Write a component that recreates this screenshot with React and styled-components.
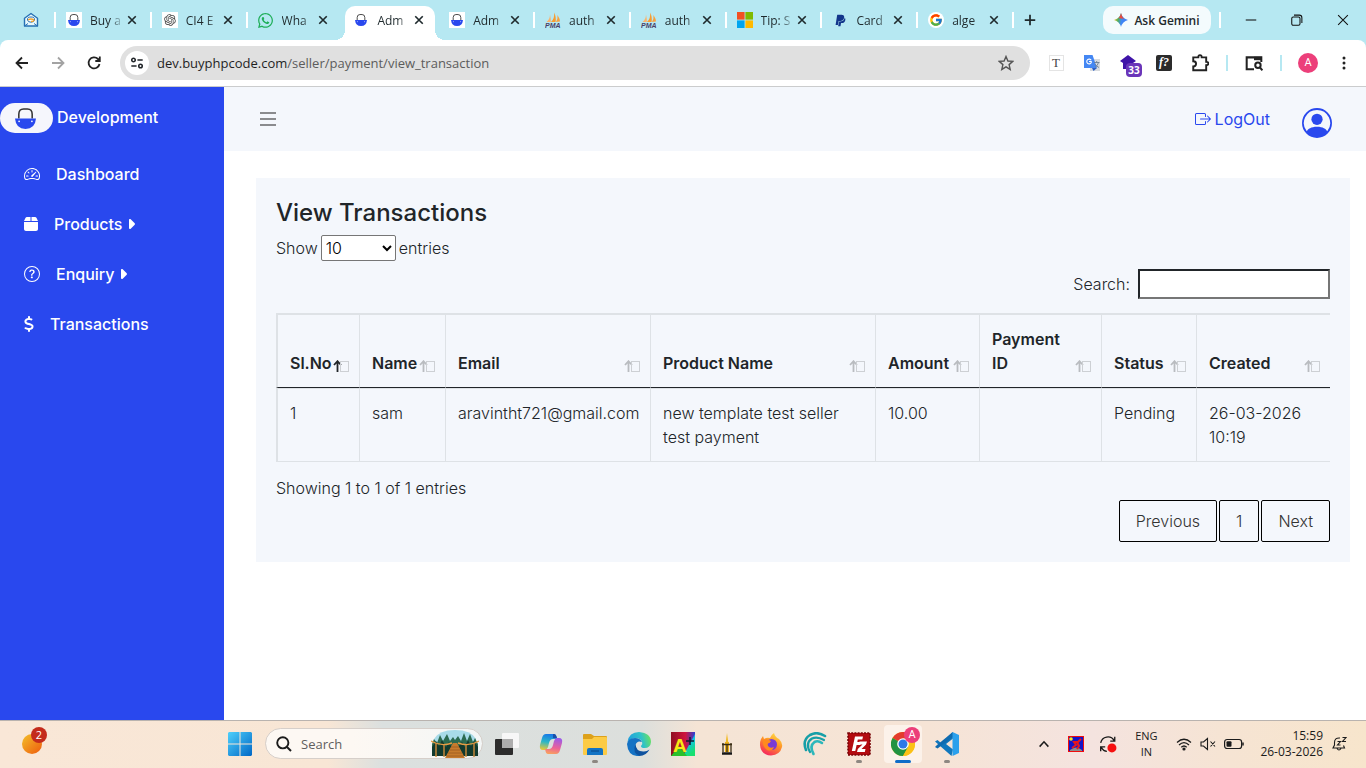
import React, { useState } from 'react';
import styled, { createGlobalStyle } from 'styled-components'
import { BsSpeedometer2, BsQuestionCircle, BsBoxArrowRight, BsPersonCircle } from 'react-icons/bs'
import { FaBox, FaDollarSign, FaCaretRight, FaWhatsapp, FaPaypal } from 'react-icons/fa6'
import { FcGoogle } from 'react-icons/fc'
import { RiOpenaiFill } from 'react-icons/ri'

const BLUE = '#2948ee';
const PANEL = '#f4f7fc';

const columns = [
  { key: 'id', label: 'Sl.No', width: 84 },
  { key: 'name', label: 'Name', width: 86 },
  { key: 'email', label: 'Email', width: 205 },
  { key: 'product', label: 'Product Name', width: 225 },
  { key: 'amount', label: 'Amount', width: 104 },
  { key: 'paymentId', label: 'Payment ID', width: 122 },
  { key: 'status', label: 'Status', width: 95 },
  { key: 'created', label: 'Created', width: 133 },
];

const transactions = [
  {
    id: '1',
    name: 'sam',
    email: 'aravintht721@gmail.com',
    product: 'new template test seller test payment',
    amount: '10.00',
    paymentId: '',
    status: 'Pending',
    created: '26-03-2026 10:19',
  },
];

/* ---------- icons ---------- */

const SiteLogo = ({ size = 16 }) => (
  <svg width={size} height={size} viewBox="0 0 22 22">
    <path d="M4 11V6.500Q4 1 9 1H13Q18 1 18 6.500V11" fill="none" stroke="#333" strokeWidth="1.600" />
    <path d="M0 11H22Q21 22 11 22Q1 22 0 11Z" fill={BLUE} />
    <circle cx="4.300" cy="14" r="0.900" fill="#fff" />
    <circle cx="17.700" cy="14" r="0.900" fill="#fff" />
  </svg>
);

const MailIcon = () => (
  <svg width="16" height="16" viewBox="0 0 16 16" fill="none">
    <path d="M1.500 6.200L8 1.500L14.500 6.200V14H1.500Z" fill="#e9f8fc" stroke="#2670b5" strokeWidth="1.400" strokeLinejoin="round" />
    <path d="M1.500 14L5 11.500M14.500 14L11 11.500" stroke="#2670b5" strokeWidth="1" />
    <path d="M4.500 8Q4 5 8 5Q12 5 11.500 8Q11 10.200 8 10.200Q5 10.200 4.500 8Z" fill="#fff" stroke="#2670b5" />
    <path d="M5 8Q8 6 11 8Q11 9.500 8 9.500" stroke="#f5a52c" strokeWidth="1.300" />
  </svg>
);

const PmaIcon = () => (
  <svg width="16" height="16" viewBox="0 0 16 16">
    <path d="M1.500 10Q5 7 5 2.500Q6 7 5.800 10Z" fill="#fbb36a" />
    <path d="M6 10Q10 6 9 0.500Q11.500 5 10.500 10Z" fill="#f89c2f" />
    <path d="M11 10Q13 7 12.500 3Q15 7 15 9.500Z" fill="#f9a03c" />
    <text x="0" y="15.500" fontFamily="Liberation Sans" fontSize="7" fontWeight="700" fontStyle="italic" fill="#4b3f68">PMA</text>
  </svg>
);

const MicrosoftIcon = () => (
  <svg width="16" height="16" viewBox="0 0 16 16">
    <path fill="#f25022" d="M0 0h7.600v7.600H0z" />
    <path fill="#7fba00" d="M8.400 0H16v7.600H8.400z" />
    <path fill="#00a4ef" d="M0 8.400h7.600V16H0z" />
    <path fill="#ffb900" d="M8.400 8.400H16V16H8.400z" />
  </svg>
);

const Glyph = ({ size = 16, d, width = 1.5, children }) => (
  <svg width={size} height={size} viewBox="0 0 16 16" fill="none" stroke="currentColor" strokeWidth={width}>
    {d && <path d={d} />}
    {children}
  </svg>
);

const SortMark = ({ active }) => (
  <svg width="16" height="12" viewBox="0 0 16 12" fill="none">
    <path d="M4.500 12V1.500M1 5L4.500 1.200L8 5" stroke={active ? '#212529' : '#b9bcc0'} strokeWidth="1.800" />
    <rect x="7.500" y="1.500" width="8" height="10" stroke="#cdd0d4" />
  </svg>
);

const GeminiIcon = () => (
  <svg width="14" height="14" viewBox="0 0 14 14">
    <defs>
      <linearGradient id="gemini" x1="0" x2="1" y1="0.400" y2="0.600">
        <stop offset="0" stopColor="#f3c51a" />
        <stop offset="0.300" stopColor="#4fae62" />
        <stop offset="0.550" stopColor="#3f87f5" />
        <stop offset="1" stopColor="#3f7df5" />
      </linearGradient>
    </defs>
    <path d="M7 0Q8.500 5.500 14 7Q8.500 8.500 7 14Q5.500 8.500 0 7Q5.500 5.500 7 0Z" fill="url(#gemini)" />
    <path d="M7 0Q8 4.500 10.500 5.800L4.500 5.300Q6.300 4 7 0Z" fill="#ea4a3c" />
  </svg>
);

const TranslateIcon = () => (
  <svg width="16" height="16" viewBox="0 0 16 16">
    <rect x="6" y="4" width="10" height="12" fill="#d9dce0" />
    <path d="M0 0H8.500L13 13H0Z" fill="#4487f3" />
    <path d="M8 13L9.500 16L13 13Z" fill="#2c5fc4" />
    <path d="M7.200 5.200A2.400 2.400 0 1 0 7.200 7.800V6.500H5" fill="none" stroke="#fff" strokeWidth="1.100" />
    <path d="M10 7.500H15.500M12.700 6V7.500M14.500 7.500Q13.500 11 11 12.500M11 9Q12.500 11.500 15 12.500" fill="none" stroke="#6c7f95" strokeWidth="0.900" />
  </svg>
);

const SearchThumb = () => (
  <svg width="48" height="28" viewBox="0 0 48 28">
    <path d="M3 9Q8 0 24 0Q40 0 45 9V25Q24 29 3 25Z" fill="#a8dbe9" />
    <path d="M1 25V14L3 9L6 13L9 5L12 11L16 4L19 11L22 7L24 10L27 6L30 11L33 3L36 11L39 4L42 12L44 8L47 14V25Z" fill="#2b6a50" />
    <path d="M1 26V17L5 11L8 16L11 10L15 17L18 12L20 16H28L31 12L34 17L37 10L40 16L43 11L47 17V26Z" fill="#123a2e" />
    <path d="M22 13H26L34 28H14Z" fill="#c67b2d" />
    <path d="M20 17H28M19 20H29M17 23H31M16 26H32" stroke="#9a5a22" strokeWidth="0.800" />
    <path d="M0 11Q10 17 21 13M27 13Q38 17 48 11" fill="none" stroke="#e59d45" strokeWidth="1.400" />
    <path d="M5 13V27M13 15V27M35 15V27M43 13V27" stroke="#d08b3b" strokeWidth="1.400" />
  </svg>
);

const WindowsIcon = () => (
  <svg width="24" height="24" viewBox="0 0 24 24">
    <defs>
      <linearGradient id="win" x1="0" y1="0" x2="1" y2="1">
        <stop offset="0" stopColor="#4fd0fb" />
        <stop offset="1" stopColor="#0067c6" />
      </linearGradient>
    </defs>
    <path fill="url(#win)" d="M1 0H11.500V11.500H0V1ZM12.500 0H23L24 1V11.500H12.500ZM0 12.500H11.500V24H1L0 23ZM12.500 12.500H24V23L23 24H12.500Z" />
  </svg>
);

const TaskViewIcon = () => (
  <svg width="24" height="24" viewBox="0 0 24 24">
    <rect x="7" y="1" width="17" height="15" rx="1" fill="#f7f7f7" />
    <rect x="0" y="7" width="18" height="16" rx="1" fill="#2c2c2c" />
    <rect x="7" y="7" width="11" height="9" fill="#adadad" />
  </svg>
);

const CopilotIcon = () => (
  <svg width="24" height="24" viewBox="0 0 24 24">
    <defs>
      <linearGradient id="copA" x1="0.500" y1="0" x2="0.300" y2="1">
        <stop offset="0" stopColor="#1878e8" />
        <stop offset="0.500" stopColor="#2ab6c8" />
        <stop offset="1" stopColor="#e9c838" />
      </linearGradient>
      <linearGradient id="copB" x1="0.600" y1="0" x2="0.400" y2="1">
        <stop offset="0" stopColor="#9a5bea" />
        <stop offset="0.600" stopColor="#ec6397" />
        <stop offset="1" stopColor="#f9a060" />
      </linearGradient>
    </defs>
    <path d="M7 2H15Q17 2 17.500 5L18 7H14Q11 7 10 11L9 15Q8 18 6 18H4Q0 18 1 13L3 6Q4 2 7 2Z" fill="url(#copA)" />
    <path d="M17 22H9Q7 22 6.500 19L6 17H10Q13 17 14 13L15 9Q16 6 18 6H20Q24 6 23 11L21 18Q20 22 17 22Z" fill="url(#copB)" />
    <path d="M14 2H15Q17 2 18 6H14Z" fill="#1b4fa9" />
  </svg>
);

const FolderIcon = () => (
  <svg width="24" height="24" viewBox="0 0 24 24">
    <path d="M0 3Q0 2 1 2H8L11 4H23Q24 4 24 5V10H0Z" fill="#dda11b" />
    <path d="M0 7H9L11 5H23Q24 5 24 6V22Q24 23 23 23H1Q0 23 0 22Z" fill="#fccb45" />
    <path d="M4 23V18Q4 16 6 16H18Q20 16 20 18V23Z" fill="#1273c4" />
    <path d="M8 19H16" stroke="#0b559b" strokeWidth="1.500" />
  </svg>
);

const EdgeIcon = () => (
  <svg width="24" height="24" viewBox="0 0 24 24">
    <defs>
      <linearGradient id="edgeA" x1="0" y1="0.500" x2="1" y2="0.300">
        <stop offset="0" stopColor="#1f9ede" />
        <stop offset="0.600" stopColor="#2fc2c8" />
        <stop offset="1" stopColor="#6de35b" />
      </linearGradient>
    </defs>
    <path d="M0.500 10Q2 0 12 0Q24 1 24 10Q23.500 16 17.500 16Q14 16 14 14Q16 12 15 9.500Q13 6 9 6Q3 6.500 0.500 10Z" fill="url(#edgeA)" />
    <path d="M0 12Q1 6 8 6Q13 6 15 10Q10 8 8.500 13Q7 19 13 24Q1 25 0 12Z" fill="#1472c4" />
    <path d="M8.500 12Q9 20 17 19.500Q20 19.300 22.500 17.500Q19 24 12.500 24Q5 21 8.500 12Z" fill="#0d529f" />
  </svg>
);

const APlusIcon = () => (
  <svg width="24" height="24" viewBox="0 0 24 24">
    <defs>
      <linearGradient id="aplusTop" x1="0" y1="0" x2="1" y2="0">
        <stop offset="0" stopColor="#8f1022" />
        <stop offset="0.600" stopColor="#d0143c" />
        <stop offset="1" stopColor="#2a40d8" />
      </linearGradient>
      <linearGradient id="aplusSide" x1="0" y1="0" x2="0.400" y2="1">
        <stop offset="0" stopColor="#1a44d8" />
        <stop offset="0.500" stopColor="#12c4e4" />
        <stop offset="1" stopColor="#18e070" />
      </linearGradient>
    </defs>
    <rect width="24" height="24" fill="url(#aplusTop)" />
    <path d="M24 2V24H12Z" fill="url(#aplusSide)" />
    <path d="M0 24L8 14L16 24Z" fill="#2bc02a" />
    <text x="2" y="20" fontFamily="Liberation Sans" fontSize="19" fontWeight="700" fill="#f8e914">A</text>
    <path d="M19 5V13M15 9H23" stroke="#101c30" strokeWidth="1.500" />
  </svg>
);

const TowerIcon = () => (
  <svg width="14" height="24" viewBox="0 0 14 24">
    <path d="M7 1L8.200 10H5.800Z" fill="#f0b921" />
    <path d="M5 10H9V20H5Z" fill="#efb31c" />
    <path d="M3 11V20M11 11V20M7 12V20M2 12.500H12" stroke="#3a2d14" strokeWidth="1.300" />
    <path d="M2 21.500H12" stroke="#171717" strokeWidth="2.500" />
  </svg>
);

const FirefoxIcon = () => (
  <svg width="24" height="24" viewBox="0 0 24 24">
    <defs>
      <linearGradient id="fox" x1="0.800" y1="0" x2="0.300" y2="1">
        <stop offset="0" stopColor="#ffe14a" />
        <stop offset="0.450" stopColor="#ff9526" />
        <stop offset="1" stopColor="#f5245f" />
      </linearGradient>
    </defs>
    <path d="M2 7L4 4L5 7Q8 5 11 6Q12 3 15 1Q16 5 20 7Q24 11 23 15Q21 23 12 23.500Q2 23 1 13Q1 9 2 7Z" fill="url(#fox)" />
    <circle cx="12.500" cy="12.500" r="5.500" fill="#7a3bd4" />
    <path d="M4 8Q8 6 12 9L10.500 11Q8 11 9 14Q11 17 15 15Q13 20 8 18Q3 14 4 8Z" fill="#ff8a1f" />
  </svg>
);

const WaveIcon = () => (
  <svg width="24" height="24" viewBox="0 0 24 24" fill="none" stroke="#169fa7" strokeWidth="2.600" strokeLinecap="round">
    <path d="M3 18Q-1 8 7 3Q14-1 22 4" />
    <path d="M7 20Q2 11 9 6.500Q14 4 21 8" strokeWidth="2.200" />
    <path d="M10.500 22Q6 14 11.500 10Q15 8 19 11" stroke="#2db7bb" />
  </svg>
);

const FileZillaIcon = () => (
  <svg width="24" height="24" viewBox="0 0 24 24">
    <rect x="1" y="1" width="22" height="22" fill="#b30b10" stroke="#7a0509" strokeWidth="1.600" strokeDasharray="2 1.200" />
    <path d="M8 4.500H16L15.300 7.500H10.800L10.300 10H14L13.300 13H9.600L8.300 19H4.800Z" fill="#fff" />
    <path d="M12.500 9.500H20L19 12.500L14.500 17H18.500L17.800 20H10L10.800 17L15.500 12.500H12Z" fill="#fff" />
  </svg>
);

const ChromeIcon = () => (
  <svg width="24" height="24" viewBox="0 0 24 24">
    <circle cx="12" cy="12" r="12" fill="#fbc116" />
    <path d="M12 12L1.600 6A12 12 0 0 1 22.400 6Z" fill="#e33b2e" />
    <path d="M1.600 6A12 12 0 0 0 12 24L17.200 15L12 12Z" fill="#229342" />
    <path d="M12 6.500H22.700A12 12 0 0 1 12 24L17 15Z" fill="#fbc116" />
    <circle cx="12" cy="12" r="5.800" fill="#fff" />
    <circle cx="12" cy="12" r="4.500" fill="#2d78e6" />
  </svg>
);

const CodeIcon = () => (
  <svg width="24" height="24" viewBox="0 0 24 24">
    <path d="M17.500 0L6 11L2.500 8L0 9.500L16.500 24L18 17.500L11 12L18 6.500Z" fill="#1177bd" />
    <path d="M0 15L2.500 16.500L18 5V0L2 13Z" fill="#0f6bb0" />
    <path d="M17.500 0L24 3V21L17.500 24Z" fill="#2ba0ec" />
  </svg>
);

/* ---------- browser ---------- */

const logoFavicon = { icon: <SiteLogo size={12} />, plate: '#fff' };

const tabs = [
  { title: 'Buy a', ...logoFavicon },
  { title: 'CI4 E', icon: <RiOpenaiFill size={14} color="#444" />, plate: '#fff' },
  { title: 'Wha', icon: <FaWhatsapp size={17} color="#1fae59" /> },
  { title: 'Adm', ...logoFavicon, active: true },
  { title: 'Adm', ...logoFavicon, plain: true },
  { title: 'auth', icon: <PmaIcon /> },
  { title: 'auth', icon: <PmaIcon /> },
  { title: 'Tip: S', icon: <MicrosoftIcon /> },
  { title: 'Card', icon: <FaPaypal size={13} color="#12358b" /> },
  { title: 'alge', icon: <FcGoogle size={14} />, plate: '#fff', round: true },
];

const BrowserTab = ({ tab }) => (
  <Tab $active={tab.active} $divided={!tab.active && !tab.plain}>
    <Favicon $plate={tab.plate} $round={tab.round}>{tab.icon}</Favicon>
    <TabTitle>{tab.title}</TabTitle>
    <TabClose aria-label="Close tab">
      <Glyph size={12} d="M3 3L13 13M13 3L3 13" width={2.2} />
    </TabClose>
  </Tab>
);

const Browser = () => (
  <header>
    <TabStrip>
      <PinnedTab aria-label="Mail"><MailIcon /></PinnedTab>
      <TabList>
        {tabs.map((tab, i) => <BrowserTab key={i} tab={tab} />)}
      </TabList>
      <StripDivider />
      <NewTab aria-label="New tab"><Glyph size={14} d="M8 2V14M2 8H14" width={2} /></NewTab>
      <Gemini><GeminiIcon />Ask Gemini</Gemini>
      <StripDivider />
      <WindowButtons>
        <WindowButton aria-label="Minimize"><Glyph size={12} d="M1 8H15" width={1.4} /></WindowButton>
        <WindowButton aria-label="Restore">
          <Glyph size={12} width={1.4}>
            <rect x="1" y="4" width="11" height="11" rx="2" />
            <path d="M4 1.500H11Q14.500 1.500 14.500 5V12" />
          </Glyph>
        </WindowButton>
        <WindowButton aria-label="Close"><Glyph size={12} d="M1.500 1.500L14.500 14.500M14.500 1.500L1.500 14.500" width={1.4} /></WindowButton>
      </WindowButtons>
    </TabStrip>
    <ToolbarBack>
      <Toolbar>
        <ToolButton aria-label="Back"><Glyph d="M14 8H2.500M8 2.500L2.500 8L8 13.500" width={1.8} /></ToolButton>
        <ToolButton aria-label="Forward" $muted><Glyph d="M2 8H13.500M8 2.500L13.500 8L8 13.500" width={1.8} /></ToolButton>
        <ToolButton aria-label="Reload"><Glyph d="M13.500 9A5.500 5.500 0 1 1 12 4L13.500 5.500M13.800 1.500V6H9.300" width={1.8} /></ToolButton>
        <AddressBar>
          <SiteInfo aria-label="Site information">
            <Glyph size={14} width={1.8}>
              <circle cx="4" cy="4.500" r="2" /><path d="M8.500 4.500H14.500M1.500 11.500H7.500" /><circle cx="12" cy="11.500" r="2" />
            </Glyph>
          </SiteInfo>
          <Url><span>dev.buyphpcode.com</span>/seller/payment/view_transaction</Url>
          <StarButton aria-label="Bookmark"><Glyph d="M8 1.500L9.900 6L14.800 6.400L11.100 9.600L12.200 14.400L8 11.800L3.800 14.400L4.900 9.600L1.200 6.400L6.100 6Z" width={1.4} /></StarButton>
        </AddressBar>
        <ToolButton aria-label="Text tool"><TextTool>T</TextTool></ToolButton>
        <ToolButton aria-label="Translate"><TranslateIcon /></ToolButton>
        <ToolButton aria-label="Extension">
          <svg width="18" height="18" viewBox="0 0 18 18"><path d="M9 1L17 7L14 9V15H4V9L1 7Z" fill="#3f14a8" /></svg>
          <Count>33</Count>
        </ToolButton>
        <ToolButton aria-label="Font finder"><FontTool>f?</FontTool></ToolButton>
        <ToolButton aria-label="Extensions">
          <Glyph size={18} d="M2 3H6.500Q6.500 1 8 1Q9.500 1 9.500 3H13.500V7Q15.500 7 15.500 8.500Q15.500 10 13.500 10V14.500H2V11Q4.500 11 4.500 8.700Q4.500 6.500 2 6.500Z" width={1.7} />
        </ToolButton>
        <ToolDivider />
        <ToolButton aria-label="Search this page">
          <Glyph size={18} width={1.8}>
            <path d="M8 13.500H1.500V3H14.500V7" /><path d="M8 4H15" strokeWidth="3" /><circle cx="11.500" cy="10" r="2.400" /><path d="M13.300 12L15.500 14.500" />
          </Glyph>
        </ToolButton>
        <ToolDivider />
        <ToolButton aria-label="Profile"><Avatar $size={20}>A</Avatar></ToolButton>
        <ToolButton aria-label="Menu">
          <svg width="16" height="16" viewBox="0 0 16 16" fill="#222"><circle cx="8" cy="3" r="1.500" /><circle cx="8" cy="8" r="1.500" /><circle cx="8" cy="13" r="1.500" /></svg>
        </ToolButton>
      </Toolbar>
    </ToolbarBack>
  </header>
);

/* ---------- page ---------- */

const menu = [
  { label: 'Dashboard', icon: BsSpeedometer2, width: 16 },
  { label: 'Products', icon: FaBox, width: 14, caret: true },
  { label: 'Enquiry', icon: BsQuestionCircle, width: 16, caret: true },
  { label: 'Transactions', icon: FaDollarSign, width: 10 },
];

const SideMenu = () => (
  <Sidebar>
    <Brand href="#"><BrandMark><SiteLogo size={21} /></BrandMark>Development</Brand>
    {menu.map(({ label, icon: Icon, width, caret }) => (
      <MenuItem href="#" key={label}>
        <Icon style={{ width }} />
        <span>{label}</span>
        {caret && <Caret />}
      </MenuItem>
    ))}
  </Sidebar>
);

const TransactionsTable = () => {
  const [sortKey, setSortKey] = useState('id');

  return (
    <Table>
      <colgroup>
        {columns.map(c => <col key={c.key} style={{ width: c.width }} />)}
      </colgroup>
      <thead>
        <tr>
          {columns.map(c => (
            <th key={c.key}>
              <SortButton onClick={() => setSortKey(c.key)}>
                <span>{c.label}</span>
                <SortMark active={sortKey === c.key} />
              </SortButton>
            </th>
          ))}
        </tr>
      </thead>
      <tbody>
        {transactions.map(row => (
          <tr key={row.id}>
            {columns.map(c => <td key={c.key}>{row[c.key]}</td>)}
          </tr>
        ))}
      </tbody>
    </Table>
  );
}

const Page = () => (
  <PageWrapper>
    <SideMenu />
    <Content>
      <TopBar>
        <MenuToggle aria-label="Toggle menu">
          <svg width="16" height="16" viewBox="0 0 16 16" stroke="#8a8b8e" strokeWidth="2"><path d="M0 2H16M0 8H16M0 14H16" /></svg>
        </MenuToggle>
        <LogOut href="#"><BsBoxArrowRight size={16} />LogOut</LogOut>
        <UserLink href="#" aria-label="Profile"><BsPersonCircle size={30} /></UserLink>
      </TopBar>
      <Card>
        <h4>View Transactions</h4>
        <LengthLabel>
          Show
          <select defaultValue="10">
            <option>10</option>
            <option>25</option>
            <option>50</option>
            <option>100</option>
          </select>
          entries
        </LengthLabel>
        <SearchLabel>Search:<input type="search" /></SearchLabel>
        <TransactionsTable />
        <TableInfo>Showing 1 to 1 of 1 entries</TableInfo>
        <Pagination>
          <PageButton>Previous</PageButton>
          <PageButton>1</PageButton>
          <PageButton>Next</PageButton>
        </Pagination>
      </Card>
    </Content>
  </PageWrapper>
);

/* ---------- taskbar ---------- */

const apps = [
  { name: 'Task view', icon: <TaskViewIcon /> },
  { name: 'Copilot', icon: <CopilotIcon /> },
  { name: 'Files', icon: <FolderIcon />, running: true },
  { name: 'Edge', icon: <EdgeIcon /> },
  { name: 'A plus', icon: <APlusIcon /> },
  { name: 'Tower', icon: <TowerIcon /> },
  { name: 'Firefox', icon: <FirefoxIcon /> },
  { name: 'Wave', icon: <WaveIcon /> },
  { name: 'FileZilla', icon: <FileZillaIcon />, running: true },
  { name: 'Chrome', icon: <ChromeIcon />, active: true },
  { name: 'Code', icon: <CodeIcon />, running: true },
];

const Taskbar = () => (
  <TaskbarWrapper>
    <Widgets>
      <WeatherButton aria-label="Widgets">
        <svg width="22" height="22" viewBox="0 0 22 22">
          <defs>
            <linearGradient id="sun" x1="0" y1="0" x2="1" y2="1">
              <stop offset="0" stopColor="#f3c02c" />
              <stop offset="1" stopColor="#ee5a0c" />
            </linearGradient>
          </defs>
          <circle cx="11" cy="11" r="10" fill="url(#sun)" />
        </svg>
        <Alert>2</Alert>
      </WeatherButton>
    </Widgets>
    <AppButton aria-label="Start"><WindowsIcon /></AppButton>
    <TaskSearch>
      <Glyph size={16} width={1.9}><circle cx="6.800" cy="6.800" r="5.600" /><path d="M11 11L15 15" /></Glyph>
      <input type="text" placeholder="Search" aria-label="Search" />
      <SearchThumb />
    </TaskSearch>
    {apps.map(app => (
      <AppButton key={app.name} aria-label={app.name} $running={app.running} $active={app.active}>
        {app.icon}
        {app.active && <AppAvatar $size={16}>A</AppAvatar>}
      </AppButton>
    ))}
    <Tray>
      <TrayButton aria-label="Hidden icons"><Glyph size={14} d="M3 11L8 5.500L13 11" width={1.7} /></TrayButton>
      <TrayButton aria-label="Remote">
        <svg width="16" height="16" viewBox="0 0 16 16">
          <rect x="0.500" y="0.500" width="15" height="15" fill="#1414c8" stroke="#f00d0d" />
          <path d="M2 14Q8 9 14 14V15H2Z" fill="#8c8c8c" />
          <path d="M4 12L8 9L6 6H10L13 3M9 6L11 10L9 13" fill="none" stroke="#e8171b" strokeWidth="2" />
          <circle cx="3" cy="3" r="1.800" fill="#ffe81c" />
        </svg>
      </TrayButton>
      <TrayButton aria-label="Updates">
        <Glyph size={18} width={1.2}>
          <path d="M1.500 7A6.500 6.500 0 0 1 13.500 5M14 1.500V5.500H10M1.500 14.500V10.500H5.500M2 11Q4 14.500 7 14.500" />
          <circle cx="11.500" cy="11.500" r="4" fill="#f50f0f" stroke="none" />
        </Glyph>
      </TrayButton>
      <Language>ENG<br />IN</Language>
      <Status>
        <Glyph width={1.2}>
          <path d="M1 6.500Q8 0 15 6.500M3 9Q8 4.200 13 9M5.300 11.300Q8 8.700 10.700 11.300" /><circle cx="8" cy="13" r="1" fill="currentColor" />
        </Glyph>
        <Glyph width={1.1}><path d="M1 6H3.500L7.500 2.500V13.500L3.500 10H1ZM10.500 5.500L15 10.500M15 5.500L10.500 10.500" /></Glyph>
        <svg width="20" height="12" viewBox="0 0 20 12" fill="none" stroke="#1b1b1b">
          <rect x="0.600" y="1.500" width="17" height="9" rx="2.500" strokeWidth="1.200" /><path d="M19 4.500V7.500" strokeWidth="1.500" /><rect x="2.500" y="3.300" width="5" height="5.400" rx="1" fill="#1b1b1b" stroke="none" />
        </svg>
      </Status>
      <Clock>15:59<br />26-03-2026</Clock>
      <Glyph width={1.1}>
        <path d="M9 2Q3.500 1.500 3.500 6.500V9L2 12H13.500L12.500 9.500M6 12.500Q8 15.500 10 12.500M6.500 5.500H9.500L6.500 9H9.500M11.500 1.500H15L11.500 5.500H15" />
      </Glyph>
    </Tray>
  </TaskbarWrapper>
);

const App = () => (
  <Screen>
    <GlobalStyle />
    <Browser />
    <Page />
    <Taskbar />
  </Screen>
);

export default App

const GlobalStyle = createGlobalStyle`
  * {
    box-sizing: border-box;
  }
  body {
    margin: 0;
    font-family: Inter, 'Liberation Sans', sans-serif;
    color: #212529;
  }
  button {
    padding: 0;
    border: 0;
    background: none;
    color: inherit;
    font: inherit;
  }
  a {
    text-decoration: none;
  }
  svg {
    flex: none;
  }
`
const Screen = styled.div`
  display: flex;
  flex-direction: column;
  min-height: 100vh;
`

const TabStrip = styled.div`
  display: flex;
  align-items: center;
  height: 40px;
  padding-left: 8px;
  background: #b6e8f2;
  font: 12px 'Open Sans', sans-serif;
  color: #1f2a2d;
`
const PinnedTab = styled.button`
  display: flex;
  justify-content: center;
  width: 46px;
`
const TabList = styled.div`
  display: flex;
  flex: 1;
  min-width: 0;
  align-self: stretch;
`
const Tab = styled.div`
  position: relative;
  display: flex;
  flex: 1;
  min-width: 0;
  align-items: center;
  margin: 6px 2px 0 4px;
  padding: 0 8px 6px;
  border-radius: 10px 10px 0 0;
  background: ${p => p.$active ? '#fff' : 'none'};

  &::before, &::after {
    content: '';
    position: absolute;
    bottom: 0;
    width: 10px;
    height: 10px;
    display: ${p => p.$active || p.$divided ? 'block' : 'none'};
  }
  &::before {
    left: -10px;
    background: radial-gradient(circle at 0 0, transparent 10px, #fff 10px);
  }
  &::after {
    right: -10px;
    background: radial-gradient(circle at 100% 0, transparent 10px, #fff 10px);
  }
  ${p => p.$divided && `
    &::before {
      left: -4px;
      bottom: 12px;
      width: 2px;
      height: 16px;
      background: #fff;
    }
    &::after {
      display: none;
    }
  `}
`
const Favicon = styled.span`
  display: flex;
  flex: none;
  align-items: center;
  justify-content: center;
  width: 16px;
  height: 16px;
  margin-right: 8px;
  border-radius: ${p => p.$round ? '8px' : 0};
  background: ${p => p.$plate || 'none'};
`
const TabTitle = styled.span`
  flex: 1;
  white-space: nowrap;
  mask-image: linear-gradient(to right, #000 60%, transparent);
`
const TabClose = styled.button`
  display: flex;
  align-items: center;
  justify-content: center;
  width: 16px;
  height: 16px;
`
const StripDivider = styled.span`
  width: 2px;
  height: 16px;
  background: #fff;
`
const NewTab = styled.button`
  display: flex;
  justify-content: center;
  width: 32px;
  margin-right: auto;
`
const Gemini = styled.button`
  display: flex;
  align-items: center;
  justify-content: center;
  gap: 6px;
  width: 108px;
  height: 28px;
  margin: 0 8px 0 57px;
  border-radius: 10px;
  background: #f4fbfd;
  font-size: 12px;
  font-weight: 600;
`
const WindowButtons = styled.div`
  display: flex;
  margin-left: 7px;
`
const WindowButton = styled.button`
  display: flex;
  align-items: center;
  justify-content: center;
  width: 46px;
  height: 40px;
  color: #111;
`

const ToolbarBack = styled.div`
  background: #b6e8f2;
`
const Toolbar = styled.div`
  display: flex;
  align-items: center;
  gap: 8px;
  height: 47px;
  padding: 0 8px;
  border-bottom: 1px solid #cbcccd;
  border-radius: 8px 8px 0 0;
  background: #fff;
`
const ToolButton = styled.button`
  position: relative;
  display: flex;
  flex: none;
  align-items: center;
  justify-content: center;
  width: 28px;
  height: 28px;
  color: ${p => p.$muted ? '#a3a3a3' : '#222'};
`
const ToolDivider = styled.span`
  width: 2px;
  height: 16px;
  margin: 0 4px;
  background: #b6e8f2;
`
const AddressBar = styled.div`
  display: flex;
  flex: 1;
  align-items: center;
  gap: 8px;
  height: 34px;
  margin: 0 4px;
  padding: 0 14px 0 5px;
  border-radius: 17px;
  background: #e0e0e0;
`
const SiteInfo = styled.button`
  display: flex;
  align-items: center;
  justify-content: center;
  width: 24px;
  height: 24px;
  border-radius: 12px;
  background: #fff;
`
const Url = styled.span`
  flex: 1;
  font: 13px 'Open Sans', sans-serif;
  color: #5c5c5c;

  span {
    color: #1f1f1f;
  }
`
const StarButton = styled.button`
  display: flex;
  padding: 2px;
  color: #555;
`
const TextTool = styled.span`
  width: 15px;
  height: 16px;
  border: 1px solid #e4e4e4;
  font: 13px/14px 'Liberation Serif', serif;
  color: #444;
`
const FontTool = styled.span`
  width: 16px;
  height: 16px;
  border-radius: 2px;
  background: #2b2b2b;
  font: italic bold 12px/15px 'Liberation Serif', serif;
  color: #fff;
`
const Count = styled.span`
  position: absolute;
  right: 0;
  bottom: 0;
  width: 16px;
  height: 14px;
  border-radius: 4px;
  background: #6a35b9;
  font: bold 10px/14px 'Open Sans', sans-serif;
  color: #fff;
`
const Avatar = styled.span`
  width: ${p => p.$size}px;
  height: ${p => p.$size}px;
  border-radius: 50%;
  background: #ec3f7a;
  font: 11px/${p => p.$size}px Roboto, sans-serif;
  text-align: center;
  color: #fff;
`

const PageWrapper = styled.div`
  display: flex;
  flex: 1;
  background: #fff;
`
const Sidebar = styled.nav`
  display: flex;
  flex-direction: column;
  width: 224px;
  padding-top: 16px;
  background: ${BLUE};
`
const Brand = styled.a`
  display: flex;
  gap: 4px;
  margin-bottom: 16px;
  font-size: 16px;
  font-weight: 500;
  line-height: 28px;
  color: #fff;
`
const BrandMark = styled.span`
  display: flex;
  align-items: center;
  justify-content: center;
  width: 53px;
  height: 30px;
  padding-right: 3px;
  border-radius: 15px;
  background: #f5f6fc;
`
const MenuItem = styled.a`
  display: flex;
  align-items: center;
  height: 50px;
  padding: 0 24px;
  font-size: 16px;
  font-weight: 500;
  color: #fff;

  svg {
    height: 16px;
  }
  span {
    margin-left: 16px;
  }
`
const Caret = styled(FaCaretRight)`
  margin-left: 4px;
  width: 10px;
`
const Content = styled.main`
  flex: 1;
  min-width: 0;
`
const TopBar = styled.div`
  display: flex;
  align-items: center;
  height: 64px;
  padding: 0 18px 0 36px;
  background: ${PANEL};
`
const MenuToggle = styled.button`
  display: flex;
  margin-right: auto;
`
const LogOut = styled.a`
  display: flex;
  align-items: center;
  gap: 4px;
  margin-right: 32px;
  color: ${BLUE};
`
const UserLink = styled.a`
  display: flex;
  margin-right: 16px;
  padding-top: 8px;
  color: ${BLUE};
`
const Card = styled.section`
  margin: 27px 16px 0 32px;
  padding: 20px;
  background: ${PANEL};
  font-size: 16px;
  font-weight: 300;
  line-height: 24px;

  h4 {
    margin: 0 0 8px;
    font-size: 24px;
    font-weight: 500;
    line-height: 29px;
  }
`
const LengthLabel = styled.label`
  display: flex;
  align-items: center;
  gap: 3px;
  margin-bottom: 8px;

  select {
    width: 75px;
    height: 26px;
    border: 1px solid #767676;
    border-radius: 2px;
    background-color: #fff;
    font: inherit;
    color: #000;
  }
`
const SearchLabel = styled.label`
  display: flex;
  align-items: center;
  justify-content: flex-end;
  gap: 8px;
  margin-bottom: 14px;

  input {
    width: 192px;
    height: 30px;
    border: 2px solid;
    border-color: #212529 #767676 #767676 #212529;
    font: inherit;
  }
`
const Table = styled.table`
  width: 100%;
  table-layout: fixed;
  border-collapse: separate;
  border-spacing: 0;

  th, td {
    padding: 12px 10px 12px 12px;
    border-right: 1px solid #dee2e6;
    text-align: left;
  }
  th {
    border-top: 2px solid #dee2e6;
    border-bottom: 1px solid #212529;
    font-weight: 600;
    vertical-align: bottom;
  }
  td {
    border-top: 1px solid #dee2e6;
    border-bottom: 1px solid #dee2e6;
    vertical-align: top;
  }
  th:first-child, td:first-child {
    border-left: 2px solid #dee2e6;
  }
  th:last-child, td:last-child {
    border-right: 0;
  }
`
const SortButton = styled.button`
  display: flex;
  align-items: flex-end;
  justify-content: space-between;
  width: 100%;
  text-align: left;

  svg {
    margin-bottom: 3px;
  }
`
const TableInfo = styled.div`
  margin-top: 14px;
`
const Pagination = styled.div`
  display: flex;
  justify-content: flex-end;
  gap: 2px;
`
const PageButton = styled.button`
  height: 42px;
  padding: 0 16px;
  border: 1px solid #000;
  border-radius: 2px;
  color: #333;
`

const TaskbarWrapper = styled.footer`
  display: flex;
  align-items: center;
  height: 48px;
  padding-bottom: 2px;
  border-top: 1px solid #b9b3af;
  background: linear-gradient(to right, #f9e7d7 0%, #f8e6d5 24%, #dbe0df 28%, #dcdfdc 47%, #f5e4d5 51%, #f6e4d6 68%, #f4e3df 80%, #f6e4d3 90%, #f7e5cc 100%);
  font: 12px 'Open Sans', sans-serif;
  color: #1b1b1b;
`
const Widgets = styled.div`
  flex: 0 0 218px;
  padding-left: 21px;
`
const WeatherButton = styled.button`
  position: relative;
  display: flex;
`
const Alert = styled.span`
  position: absolute;
  left: 10px;
  top: -6px;
  width: 16px;
  height: 16px;
  border-radius: 8px;
  background: #c42b1c;
  font-size: 11px;
  line-height: 16px;
  color: #fff;
`
const AppButton = styled.button`
  position: relative;
  display: flex;
  flex: none;
  align-items: center;
  justify-content: center;
  width: 38px;
  height: 38px;
  margin: 0 3px;
  border-radius: 4px;
  background: ${p => p.$active ? '#fcf2ea' : 'none'};

  &::after {
    content: '';
    position: absolute;
    bottom: 0;
    width: ${p => p.$active ? 16 : 6}px;
    height: 3px;
    border-radius: 2px;
    background: ${p => p.$active ? '#0f6cc8' : '#8d8781'};
    display: ${p => p.$active || p.$running ? 'block' : 'none'};
  }
`
const AppAvatar = styled(Avatar)`
  position: absolute;
  right: 2px;
  top: 2px;
`
const TaskSearch = styled.label`
  display: flex;
  align-items: center;
  gap: 9px;
  width: 218px;
  height: 31px;
  margin: 0 2px 0 3px;
  padding: 0 3px 0 10px;
  border: 1px solid #d6cfca;
  border-radius: 16px;
  background: linear-gradient(to right, #fdf8f3 40%, #f3f6f6);

  input {
    flex: 1;
    min-width: 0;
    padding: 0;
    border: 0;
    background: none;
    font: 13px 'Open Sans', sans-serif;
  }
  input::placeholder {
    color: #5f5f5f;
  }
`
const Tray = styled.div`
  display: flex;
  align-items: center;
  margin-left: auto;
  padding-right: 19px;
`
const TrayButton = styled.button`
  display: flex;
  justify-content: center;
  width: 32px;
`
const Language = styled.button`
  width: 44px;
  font-size: 11px;
  line-height: 16px;
`
const Status = styled.div`
  display: flex;
  align-items: center;
  gap: 8px;
  padding: 0 8px;
`
const Clock = styled.div`
  padding: 0 8px;
  font-size: 12px;
  line-height: 16px;
  text-align: right;
`
